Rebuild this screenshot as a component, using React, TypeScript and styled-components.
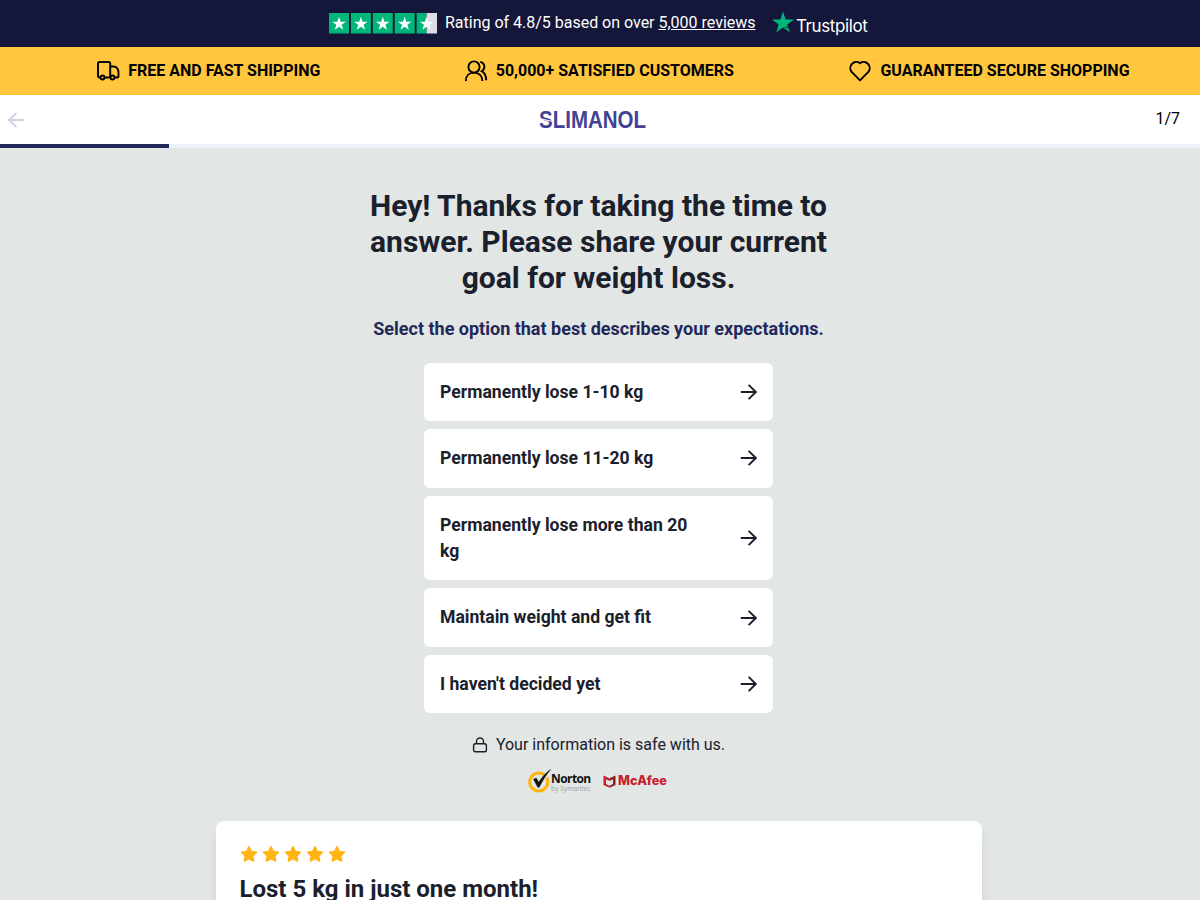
import React from 'react'
import styled, { createGlobalStyle } from 'styled-components'

const options = [
  'Permanently lose 1-10 kg',
  'Permanently lose 11-20 kg',
  'Permanently lose more than 20 kg',
  'Maintain weight and get fit',
  "I haven't decided yet",
]

const STAR = 'M10 0l2.4 7.2H20l-6.1 4.5 2.3 7.2L10 14.5l-6.2 4.4 2.3-7.2L0 7.2h7.6z'

const RatingStars: React.FC = () => (
  <svg width="108" height="21" viewBox="0 0 108 21">
    {[0, 1, 2, 3, 4].map((i) => (
      <g key={i} transform={`translate(${i * 21.9} 0)`}>
        <rect width={i === 4 ? 10 : 20} height="20.5" fill="#00b67a" />
        {i === 4 && <rect x="10" width="10.4" height="20.5" fill="#dcdce6" />}
        <path transform="translate(3.2 3.8) scale(.68)" d={STAR} fill="#fff" />
      </g>
    ))}
  </svg>
)

const TruckIcon: React.FC = () => (
  <svg width="24" height="24" viewBox="0 0 24 24" fill="none" stroke="#000" strokeWidth="1.9" strokeLinejoin="round">
    <path d="M4.300 18.500H3.400A1.400 1.400 0 0 1 2 17.100V4.400A1.400 1.400 0 0 1 3.400 3H12.800a1.400 1.400 0 0 1 1.400 1.400V18.500M8.600 18.500h5.200M14.200 7.500h3.400c2.700 0 4.900 2.600 4.900 6v3.600c0 .8-.5 1.400-1.200 1.400h-2.500" />
    <circle cx="6.500" cy="18.500" r="2" />
    <circle cx="16.500" cy="18.500" r="2" />
  </svg>
)

const PeopleIcon: React.FC = () => (
  <svg width="24" height="24" viewBox="0 0 24 24" fill="none" stroke="#000" strokeWidth="1.9">
    <circle cx="10" cy="8" r="5.6" />
    <path d="M1.800 22c0-5 3.200-8.400 8.200-8.400s8.400 3.400 8.400 8.400M16.200 2.800c2.800.7 4.200 2.500 4.200 4.900 0 2-1 3.500-2.700 4.500 3 1.700 4.500 4.800 4.500 9" />
  </svg>
)

const HeartIcon: React.FC = () => (
  <svg width="24" height="24" viewBox="0 0 24 24" fill="none" stroke="#000" strokeWidth="1.9" strokeLinejoin="round">
    <path d="M12 21.300 3.400 12.600A6.100 6.100 0 0 1 12 4.200a6.100 6.100 0 0 1 8.600 8.400z" />
  </svg>
)

const ArrowIcon: React.FC = () => (
  <svg width="18" height="18" viewBox="0 0 18 18" fill="none" stroke="currentColor" strokeWidth="1.9">
    <path d="M1.800 9h15.200M9.600 1.800 16.800 9l-7.200 7.200" />
  </svg>
)

const LockIcon: React.FC = () => (
  <svg width="16" height="16" viewBox="0 0 16 16" fill="none" stroke="#1a202c" strokeWidth="1.4">
    <rect x="1.600" y="6.700" width="12.800" height="8" rx="1.800" />
    <path d="M4.500 6.700V4.500a3.500 3.500 0 0 1 7 0v2.200" />
  </svg>
)

const NortonMark: React.FC = () => (
  <svg width="24" height="24" viewBox="0 0 24 24" fill="none">
    <circle cx="10.800" cy="13" r="9" stroke="#fdb511" strokeWidth="3.200" />
    <path d="M11 16 20.500 3" stroke="#e2e6e4" strokeWidth="3.500" />
    <path d="m5.500 10.300 2.700-1.200 2.500 4.200C14 8.500 17 4.500 22.500.5 18 6 14.500 11.500 11.200 18.300H9.800z" fill="#111" stroke="#111" strokeWidth=".5" />
  </svg>
)

const McAfeeMark: React.FC = () => (
  <svg width="13" height="13" viewBox="0 0 13 13">
    <path d="M.5.500 6.500 3.300V6L3 4.300v4.800l3.500 1.700v2L.5 9.900z" fill="#c8202f" />
    <path d="M12.500.500 6.500 3.300V6L10 4.300v4.800l-3.500 1.700v2l6-2.900z" fill="#8d1c27" />
  </svg>
)

const App: React.FC = () => {
  return (
    <Page>
      <GlobalStyle />
      <TrustBar>
        <RatingStars />
        <RatingText>Rating of 4.8/5 based on over <ReviewLink>5,000 reviews</ReviewLink></RatingText>
        <Trustpilot>
          <svg width="22" height="22" viewBox="0 0 20 19">
            <path d={STAR} fill="#00b67a" />
            <path d="m14.400 13.300.6 1.800-5-.6z" fill="#005128" />
          </svg>
          <TrustpilotName>Trustpilot</TrustpilotName>
        </Trustpilot>
      </TrustBar>
      <BenefitBar>
        <Benefit $width={416.600}><TruckIcon />FREE AND FAST SHIPPING</Benefit>
        <Benefit $width={364.400}><PeopleIcon />50,000+ SATISFIED CUSTOMERS</Benefit>
        <Benefit $width={416}><HeartIcon />GUARANTEED SECURE SHOPPING</Benefit>
      </BenefitBar>
      <Header>
        <BackButton aria-label="Back"><ArrowIcon /></BackButton>
        <Logo width="108" height="26" viewBox="0 0 108 26">
          <text x="0" y="20.700" textLength="107" lengthAdjust="spacingAndGlyphs">SLIMANOL</text>
          <path d="M0 11.500 14 14.500" stroke="#fff" strokeWidth="1" />
        </Logo>
        <Step>1/7</Step>
      </Header>
      <Progress><ProgressValue /></Progress>
      <Main>
        <Title>Hey! Thanks for taking the time to answer. Please share your current goal for weight loss.</Title>
        <Subtitle>Select the option that best describes your expectations.</Subtitle>
        <OptionList>
          {options.map((option) => (
            <Option key={option}>
              <OptionLabel>{option}</OptionLabel>
              <ArrowIcon />
            </Option>
          ))}
        </OptionList>
        <SafeNote><LockIcon />Your information is safe with us.</SafeNote>
        <Badges>
          <NortonMark />
          <Norton>
            <NortonName>Norton</NortonName>
            <NortonBy>by Symantec</NortonBy>
          </Norton>
          <McAfeeMark />
          <McAfee>McAfee</McAfee>
        </Badges>
        <Review>
          <ReviewStars>
            {[0, 1, 2, 3, 4].map((i) => (
              <svg key={i} width="18" height="18" viewBox="0 0 20 19">
                <path d="M10 1.500l2.500 5.200 5.800.8-4.200 4 1 5.800L10 14.600l-5.100 2.700 1-5.800-4.200-4 5.800-.8z" fill="#ffb412" stroke="#ffb412" strokeWidth="1.800" strokeLinejoin="round" />
              </svg>
            ))}
          </ReviewStars>
          <ReviewTitle>Lost 5 kg in just one month!</ReviewTitle>
        </Review>
      </Main>
    </Page>
  )
}

const GlobalStyle = createGlobalStyle`
  * {
    box-sizing: border-box;
  }
  body {
    margin: 0;
    background: #e2e6e4;
    color: #1a202c;
    font-family: Roboto, sans-serif;
    font-size: 16px;
    line-height: 1.5;
  }
  svg {
    flex-shrink: 0;
  }
`

const Page = styled.div`
  height: 900px;
  overflow: hidden;
`

const TrustBar = styled.div`
  display: flex;
  align-items: center;
  height: 47px;
  padding-left: 329px;
  background: #14163a;
  color: #fff;
`

const RatingText = styled.div`
  width: 311px;
  margin: -2px 0 0 8px;
  white-space: nowrap;
  letter-spacing: -0.01px;
`

const ReviewLink = styled.span`
  text-decoration: underline;
`

const Trustpilot = styled.div`
  display: flex;
  align-items: center;
  margin: -3px 0 0 16px;
`

const TrustpilotName = styled.span`
  margin: 7px 0 0 2px;
  font-family: Inter, sans-serif;
  font-size: 17px;
  line-height: 22px;
  letter-spacing: -0.4px;
`

const BenefitBar = styled.div`
  display: flex;
  height: 48px;
  background: #ffc63e;
`

const Benefit = styled.div<{ $width: number }>`
  display: flex;
  align-items: center;
  justify-content: center;
  gap: 8px;
  width: ${({ $width }) => $width}px;
  color: #000;
  font-weight: 700;
  white-space: nowrap;
`

const Header = styled.header`
  display: flex;
  align-items: center;
  justify-content: space-between;
  height: 49px;
  padding: 0 20px 0 8px;
  background: #fff;
`

const BackButton = styled.button`
  display: flex;
  justify-content: flex-end;
  width: 18px;
  padding: 0;
  border: none;
  background: none;
  color: #cbd5e0;
  transform: scaleX(-1);
`

const Logo = styled.svg`
  margin-right: -5px;
  fill: #434294;
  font-family: 'Liberation Sans', sans-serif;
  font-size: 23px;
  font-weight: 700;
`

const Step = styled.div`
  margin-top: -2px;
  color: #000;
`

const Progress = styled.div`
  height: 4px;
  background: #edf2f7;
`

const ProgressValue = styled.div`
  width: 169px;
  height: 4px;
  background: #22285a;
`

const Main = styled.main`
  display: flex;
  flex-direction: column;
  align-items: center;
  width: 1197px;
  padding-top: 40px;
`

const Title = styled.h1`
  width: 480px;
  margin: 0;
  font-size: 30px;
  font-weight: 700;
  line-height: 36px;
  text-align: center;
`

const Subtitle = styled.p`
  margin: 19px 0 20.8px;
  color: #22285a;
  font-size: 18px;
  font-weight: 700;
  line-height: 27px;
`

const OptionList = styled.div`
  display: flex;
  flex-direction: column;
  gap: 8px;
  width: 349px;
`

const Option = styled.button`
  display: flex;
  align-items: center;
  justify-content: space-between;
  padding: 16px;
  border: none;
  border-radius: 6px;
  background: #fff;
  color: #1a202c;
  font: 700 17.6px/1.5 Roboto, sans-serif;
  text-align: left;
`

const OptionLabel = styled.span`
  max-width: 260px;
`

const SafeNote = styled.div`
  display: flex;
  align-items: center;
  gap: 8px;
  margin-top: 20px;
`

const Badges = styled.div`
  display: flex;
  align-items: center;
  height: 26px;
  margin: 11px 2px 0 0;
`

const Norton = styled.div`
  display: flex;
  flex-direction: column;
  width: 40px;
  margin: 3px 12px 0 -1px;
`

const NortonName = styled.span`
  color: #111;
  font: 700 12px/11px 'Open Sans', sans-serif;
  letter-spacing: -0.6px;
`

const NortonBy = styled.span`
  color: #9c9f9e;
  font: 6.7px/9px 'Open Sans', sans-serif;
  white-space: nowrap;
`

const McAfee = styled.span`
  margin: -2px 0 0 2px;
  color: #c8202f;
  font: 800 12.7px/13px Inter, sans-serif;
`

const Review = styled.section`
  width: 766px;
  height: 200px;
  margin-top: 27px;
  padding: 24px;
  border-radius: 8px;
  background: #fff;
  box-shadow: 0 10px 15px -3px rgba(0, 0, 0, 0.1), 0 4px 6px -2px rgba(0, 0, 0, 0.05);
`

const ReviewStars = styled.div`
  display: flex;
  gap: 4px;
`

const ReviewTitle = styled.h2`
  margin: 8px 0 0;
  font-size: 24px;
  font-weight: 700;
  line-height: 36px;
`

export default App
